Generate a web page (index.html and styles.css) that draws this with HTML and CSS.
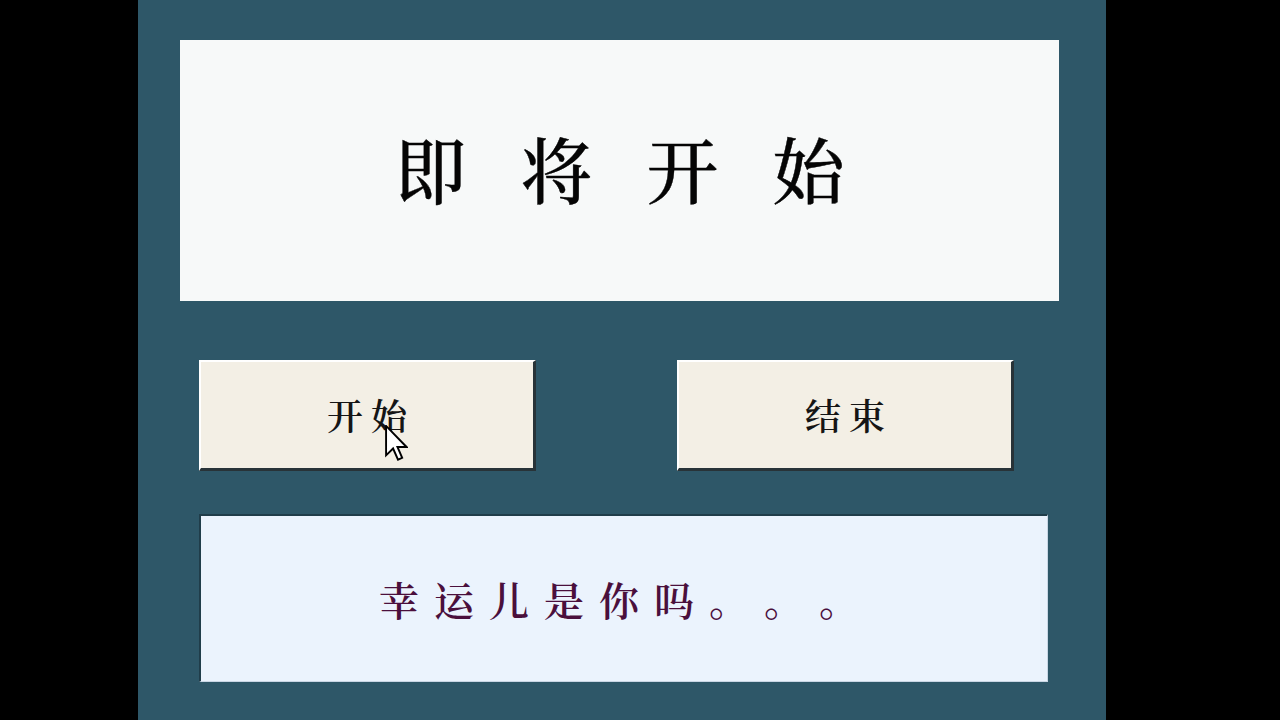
FILE: index.html
```html
<!DOCTYPE html>
<html lang="zh-CN">
<head>
<meta charset="utf-8">
<title>抽奖</title>
<link rel="stylesheet" href="styles.css">
</head>
<body>
<div class="panel">
  <div class="display"><span class="title">即将开始</span></div>
  <div class="buttons">
    <div class="btn"><span class="btn-label">开始</span></div>
    <div class="btn"><span class="btn-label">结束</span></div>
  </div>
  <div class="result"><span class="result-text">幸运儿是你吗。。。</span></div>
  <svg class="cursor" viewBox="0 0 12 19" width="23" height="36">
    <path d="M0.5 0.5 L0.5 16 L4.2 12.4 L6.8 18.3 L9 17.3 L6.5 11.6 L11.3 11.6 Z" fill="#fff" stroke="#000" stroke-width="1" stroke-linejoin="miter"/>
  </svg>
</div>
</body>
</html>
```
FILE: styles.css
```css
html, body {
  margin: 0;
  padding: 0;
  background: #000;
  width: 1280px;
  height: 720px;
  overflow: hidden;
}

.panel {
  position: relative;
  box-sizing: border-box;
  margin-left: 138px;
  width: 968px;
  height: 720px;
  background: #2e5768;
  padding-top: 40px;
  display: flex;
  flex-direction: column;
  font-family: "Noto Serif CJK SC", "Noto Sans CJK SC", serif;
  text-spacing-trim: space-all;
}

.display {
  box-sizing: border-box;
  margin-left: 42px;
  width: 879px;
  height: 261px;
  padding-bottom: 8px;
  background: #f7f9f9;
  display: flex;
  align-items: center;
  justify-content: center;
}

.title {
  font-size: 72px;
  font-weight: 500;
  -webkit-text-stroke: 0.4px #050505;
  letter-spacing: 54px;
  margin-right: -54px;
  color: #050505;
  line-height: 1;
}

.buttons {
  margin-top: 59px;
  margin-left: 61px;
  display: flex;
  gap: 141px;
}

.btn {
  box-sizing: border-box;
  width: 337px;
  height: 111px;
  background: #f3efe5;
  border-style: solid;
  border-width: 2px 3px 3px 2px;
  border-color: #ffffff #283338 #283338 #ffffff;
  display: flex;
  align-items: center;
  justify-content: center;
}

.btn-label {
  font-size: 36px;
  font-weight: 600;
  letter-spacing: 8px;
  margin-right: -8px;
  color: #151515;
  line-height: 1;
}

.result {
  box-sizing: border-box;
  margin-top: 43px;
  margin-left: 61px;
  width: 849px;
  height: 168px;
  background: #ebf3fd;
  border-style: solid;
  border-width: 2px 1px 1px 2px;
  border-color: #203d4a #c9d6e4 #c9d6e4 #203d4a;
  display: flex;
  align-items: center;
  justify-content: center;
}

.result-text {
  font-size: 40px;
  font-weight: 600;
  letter-spacing: 15px;
  margin-right: -15px;
  color: #4a0f3c;
  line-height: 1;
  padding-right: 10px;
}

.cursor {
  position: absolute;
  left: 247px;
  top: 425px;
}
```
